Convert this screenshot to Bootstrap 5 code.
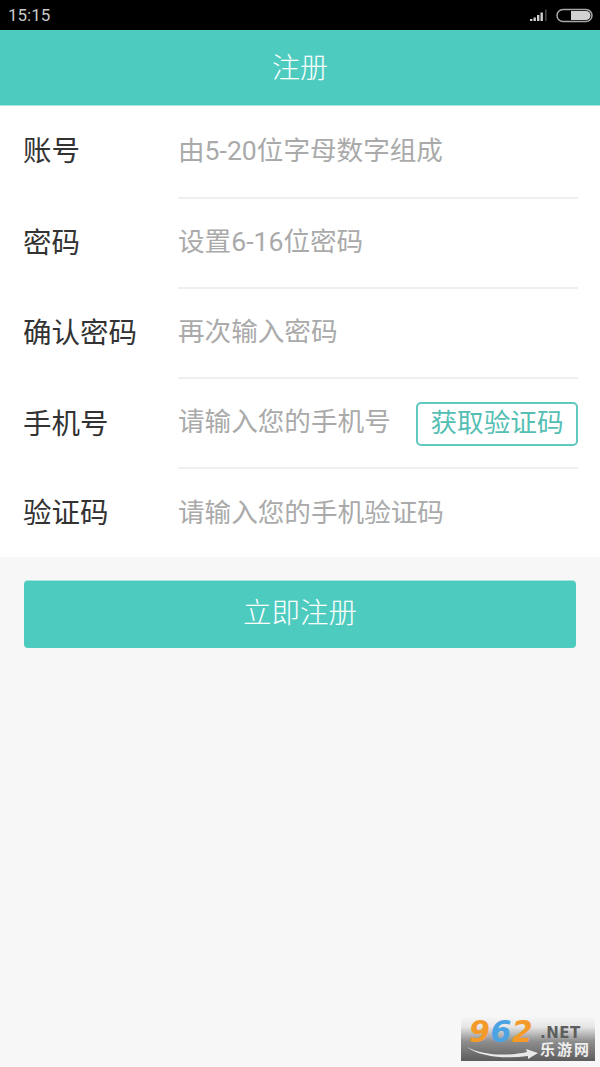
<!DOCTYPE html>
<html lang="zh">
<head>
<meta charset="utf-8">
<title>注册</title>
<link href="https://cdn.jsdelivr.net/npm/bootstrap@5.3.0/dist/css/bootstrap.min.css" rel="stylesheet">
<style>
html,body{height:1067px;overflow:hidden}
body{background:#f7f7f7;font-family:Roboto,"Noto Sans CJK SC","Liberation Sans",sans-serif;position:relative}
.sbar{height:30px;background:#000;color:#c9c9c9;padding:2px 7px 0 8px;font-family:Roboto,sans-serif;font-size:17px}
.head{height:76px;background:#4ecbbf;color:#fff;font-size:28px;font-weight:300;border-bottom:1px solid #a5e6df;padding-top:3px}
.regform{background:#fff;height:451px}
.frow{height:90px;padding-left:23px}
.frow:first-child{height:93px}
.frow:last-child{height:88px}
.flabel{width:155px;flex:none;font-size:28.5px;line-height:1;color:#333}
.frow:nth-child(n+4) .flabel{padding-top:2px}
.frow:last-child .flabel{padding-top:3px}
.fcell{height:100%;margin-right:22px;border-bottom:2px solid #efefef;font-size:26.6px;color:#aaa;line-height:1;padding-bottom:1px}
.frow:last-child .fcell{border-bottom:0;padding-bottom:0}
.codebtn{width:162px;height:44px;border:2px solid #5fc9bf;border-radius:5px;background:#fff;color:#55bfb4;font-size:26.6px;line-height:1;padding:0 0 2px;margin-top:3px}
.submitbtn{height:68px;margin:23px 24px 0;width:552px;background:#4ecbbf;border:0;border-top:1px solid #a5e6df;border-radius:4px;color:#fff;font-size:28.5px;font-weight:300;line-height:1;padding-bottom:1px}
.wmark{position:absolute;left:461px;top:1017px;width:134px;height:44px;background:linear-gradient(#f6f6f6 0,#e6e6e6 22%,#8f8f8f 55%,#5c5c5c 100%)}
.wnum{position:absolute;left:8px;top:0;font:italic 700 30px/30px "DejaVu Sans",sans-serif;color:#f39a2b;letter-spacing:.5px}
.wnum span{color:#4ba3e3}
.wnet{position:absolute;left:79px;top:7px;font:700 15px/18px "DejaVu Sans",sans-serif;color:#5e5e5e;letter-spacing:.5px}
.wcn{position:absolute;left:79px;top:24px;font-size:15px;line-height:19px;color:#eee;letter-spacing:2px;font-weight:700;white-space:nowrap}
.warc{position:absolute;left:4px;top:29px}
</style>
</head>
<body>
<div class="sbar d-flex align-items-center justify-content-between">
  <span>15:15</span>
  <span class="d-flex align-items-center gap-2">
    <svg width="18" height="14" viewBox="0 0 18 14"><g fill="#d0d0d0"><rect x="0" y="10" width="2.4" height="2"/><rect x="3.5" y="8.5" width="2.4" height="3.5"/><rect x="7" y="6" width="2.4" height="6"/><rect x="10.5" y="3.5" width="2.4" height="8.5"/></g><rect x="15" y="0.5" width="1.6" height="11.5" fill="#444"/></svg>
    <svg width="37" height="16" viewBox="0 0 37 16"><rect x="1" y="1.5" width="35" height="12" rx="6" fill="none" stroke="#a8a8a8" stroke-width="1.5"/><path d="M15 3h15a4.5 4.5 0 0 1 0 9H15z" fill="#d2d2d2"/></svg>
  </span>
</div>
<div class="head d-flex align-items-center justify-content-center">注册</div>
<form class="regform">
  <div class="frow d-flex align-items-stretch">
    <div class="flabel d-flex align-items-center">账号</div>
    <div class="fcell flex-grow-1 d-flex align-items-center">由5-20位字母数字组成</div>
  </div>
  <div class="frow d-flex align-items-stretch">
    <div class="flabel d-flex align-items-center">密码</div>
    <div class="fcell flex-grow-1 d-flex align-items-center">设置6-16位密码</div>
  </div>
  <div class="frow d-flex align-items-stretch">
    <div class="flabel d-flex align-items-center">确认密码</div>
    <div class="fcell flex-grow-1 d-flex align-items-center">再次输入密码</div>
  </div>
  <div class="frow d-flex align-items-stretch">
    <div class="flabel d-flex align-items-center">手机号</div>
    <div class="fcell flex-grow-1 d-flex align-items-center justify-content-between">
      <span>请输入您的手机号</span>
      <button type="button" class="codebtn">获取验证码</button>
    </div>
  </div>
  <div class="frow d-flex align-items-stretch">
    <div class="flabel d-flex align-items-center">验证码</div>
    <div class="fcell flex-grow-1 d-flex align-items-center">请输入您的手机验证码</div>
  </div>
</form>
<button type="button" class="submitbtn d-block">立即注册</button>
<div class="wmark">
  <svg class="warc" width="75" height="14" viewBox="0 0 75 14"><path d="M2 1C18 10 45 10 62 6l-1-3 12 4-10 6 0-3C40 13 15 11 2 1z" fill="#e8e8e8"/></svg>
  <div class="wnum">9<span>6</span>2</div>
  <div class="wnet">.NET</div>
  <div class="wcn">乐游网</div>
</div>
</body>
</html>
